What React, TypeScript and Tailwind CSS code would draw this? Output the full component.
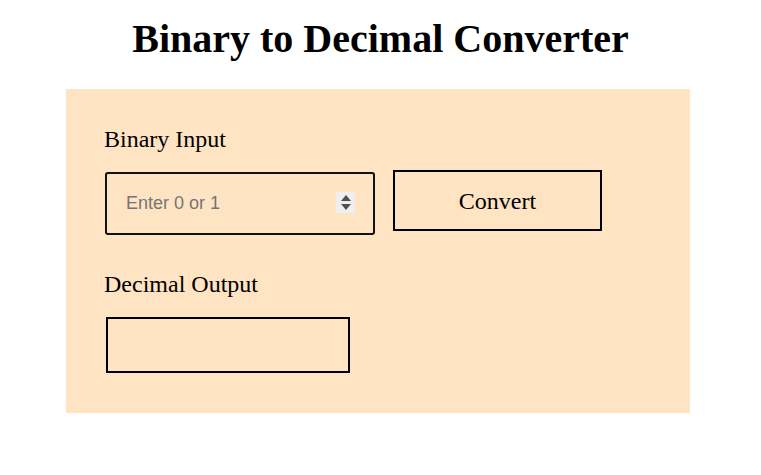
export default function App() {
  return (
    <div className="min-h-screen bg-white font-['Liberation_Serif',serif] text-black">
      <h1 className="pt-[16px] text-center text-[40px] font-bold leading-[46px]">
        Binary to Decimal Converter
      </h1>

      <div className="ml-[66px] mt-[27px] w-[624px] bg-[#ffe4c4] pl-[38px] pt-[37px] pb-[40px]">
        <label htmlFor="binary" className="block text-[24px] leading-[27px]">
          Binary Input
        </label>

        <div className="mt-[17px] flex items-start">
          <div className="relative ml-[1px] mt-[2px]">
            <input
              id="binary"
              type="text"
              placeholder="Enter 0 or 1"
              className="block h-[63px] w-[270px] rounded-[3px] border-2 border-[#111] bg-transparent pl-[19px] font-['Liberation_Sans',Arial,sans-serif] text-[18px] outline-none placeholder:text-[#757575]"
            />
            <div className="absolute right-[20px] top-[20px] flex h-[21px] w-[19px] flex-col items-center justify-center gap-[3px] bg-[#efefef]">
              <svg width="10" height="6" viewBox="0 0 10 6">
                <path d="M5 0 L10 6 L0 6 Z" fill="#505050" />
              </svg>
              <svg width="10" height="6" viewBox="0 0 10 6">
                <path d="M0 0 L10 0 L5 6 Z" fill="#505050" />
              </svg>
            </div>
          </div>

          <button className="ml-[18px] h-[61px] w-[209px] border-2 border-black bg-transparent text-[24px]">
            Convert
          </button>
        </div>

        <div className="mt-[36px] text-[24px] leading-[27px]">Decimal Output</div>

        <div className="ml-[2px] mt-[19px] h-[56px] w-[244px] border-2 border-black"></div>
      </div>
    </div>
  )
}
